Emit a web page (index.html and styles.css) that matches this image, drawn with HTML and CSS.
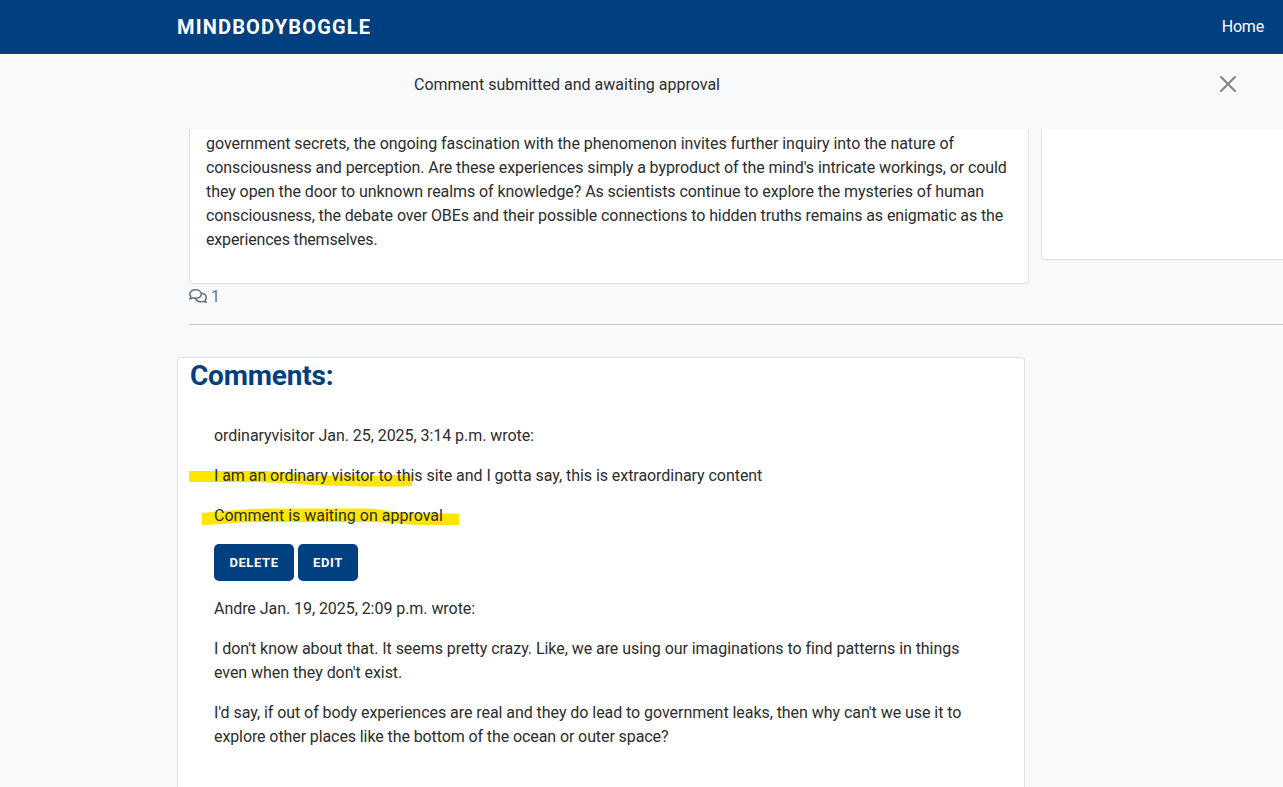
FILE: index.html
```
<!DOCTYPE html>
<html lang="en">
<head>
<meta charset="utf-8">
<title>MindBodyBoggle</title>
<link rel="stylesheet" href="styles.css">
</head>
<body>
<nav class="navbar">
  <a class="brand">MINDBODYBOGGLE</a>
  <a class="nav-link">Home</a>
</nav>
<div class="alert">
  <span class="alert-text">Comment submitted and awaiting approval</span>
  <svg class="close" viewBox="0 0 18 18"><path d="M2 2L16 16M16 2L2 16" fill="none" stroke="#808284" stroke-width="2" stroke-linecap="round"/></svg>
</div>
<main class="page">
  <section class="article-row">
    <article class="card article">
      <p><span class="snug">government secrets, the ongoing fascination with the phenomenon invites further inquiry into the nature of</span><br><span class="tighter">consciousness and perception. Are these experiences simply a byproduct of the mind's intricate workings, or could</span><br><span class="tight">they open the door to unknown realms of knowledge? As scientists continue to explore the mysteries of human</span><br><span class="tighter">consciousness, the debate over OBEs and their possible connections to hidden truths remains as enigmatic as the</span><br><span class="tightest">experiences themselves.</span></p>
    </article>
    <aside class="card side"></aside>
  </section>
  <div class="count">
    <svg class="count-icon" viewBox="0 0 18 14" fill="none" stroke="#6c757d" stroke-width="1.6" stroke-linejoin="round" stroke-linecap="round"><path d="M6.6.8C9.9.8 12.3 2.7 12.3 5.1S9.9 9.3 6.6 9.3C5.6 9.3 4.700 9.100 4 8.800C3.200 9.400 2.100 9.800.8 9.800C1.400 9.200 1.800 8.500 1.900 7.600C1.200 6.900.8 6 .8 5.100C.8 2.700 3.300.8 6.600.8Z"/><path d="M12.900 4.300C15.500 4.700 17.200 6.600 17.200 8.700C17.200 9.700 16.800 10.600 16.100 11.300C16.200 12.100 16.600 12.700 17.200 13.200C15.900 13.200 14.900 12.900 14 12.400C13.400 12.700 12.600 12.800 11.700 12.800C9.300 12.800 7.400 11.700 6.600 9.900"/></svg>
    <span>1</span>
  </div>
  <hr class="rule">
  <section class="card comments">
    <h3>Comments:</h3>
    <div class="comment-list">
      <p class="snug">ordinaryvisitor Jan. 25, 2025, 3:14 p.m. wrote:</p>
      <p class="snug">I am an ordinary visitor to this site and I gotta say, this is extraordinary content</p>
      <p>Comment is waiting on approval</p>
      <div class="actions"><button class="btn delete">DELETE</button><button class="btn edit">EDIT</button></div>
      <p class="snug">Andre Jan. 19, 2025, 2:09 p.m. wrote:</p>
      <p class="snug">I don't know about that. It seems pretty crazy. Like, we are using our imaginations to find patterns in things<br>even when they don't exist.</p>
      <p class="snug">I'd say, if out of body experiences are real and they do lead to government leaks, then why can't we use it to<br><span class="tighter">explore other places like the bottom of the ocean or outer space?</span></p>
    </div>
    <svg class="marker" viewBox="0 0 272 56"><path fill="#ffe600" d="M1 3H77C94 4 107 7 124 7.500H197L200 7H224V18L212 18.500H180C150 18 120 17 100 15.500C80 14 65 14 50 14H1Z"/><path fill="#ffe600" d="M14 45C40 43 58 41 78 40.500H180C195 41 207 45.500 224 45.500H271V57H235C214 57 205 54 184 54H65C47 54 31 57 14 57Z"/></svg>
  </section>
</main>
</body>
</html>
```
FILE: styles.css
```
* { box-sizing: border-box; }
body {
  margin: 0;
  height: 787px;
  overflow: hidden;
  background: #f8f9fb;
  color: #2b2d2f;
  font: 16px/24px Roboto, sans-serif;
}
.navbar {
  height: 54px;
  padding: 0 19px 0 177px;
  display: flex;
  align-items: center;
  justify-content: space-between;
  background: #004080;
  color: #fff;
}
.brand { font-size: 20px; font-weight: 700; letter-spacing: 1.17px; }
.nav-link { letter-spacing: -0.2px; }
.alert {
  height: 75px;
  padding: 19px 46px 0 414px;
  display: flex;
  justify-content: space-between;
}
.close { width: 18px; height: 18px; margin-top: 2px; }
.page { padding-left: 177px; }
.card { background: #fff; border: 1px solid #dee0e2; border-radius: 4px; }
.article-row { display: flex; gap: 12px; padding-left: 12px; align-items: flex-start; }
.article {
  flex: none;
  width: 840px;
  height: 155px;
  padding: 3px 16px 0;
  border-top: 0;
  border-radius: 0 0 4px 4px;
  white-space: nowrap;
}
.article p { margin: 0; }
.snug { letter-spacing: -0.052px; }
.tight { letter-spacing: -0.076px; }
.tighter { letter-spacing: -0.097px; }
.tightest { letter-spacing: -0.17px; }
.side { flex: 1; height: 131px; border-top: 0; border-right: 0; border-radius: 0 0 0 4px; }
.count { display: flex; gap: 4px; padding: 1px 0 0 12px; color: #6c757d; }
.count-icon { width: 18px; height: 14px; margin-top: 4px; }
.rule { margin: 15px 0 33px 12px; border: 0; height: 1px; background: #c5c7c9; }
.comments { position: relative; width: 848px; height: 460px; padding: 0 12px; margin-top: -1px; }
.comments h3 { margin: 0; padding-top: 1px; color: #004080; font-size: 28px; line-height: 34px; font-weight: 700; letter-spacing: -0.2px; }
.comment-list { padding: 31px 24px 0; white-space: nowrap; position: relative; z-index: 1; }
.comment-list p { margin: 0 0 16px; }
.actions { display: flex; gap: 4px; margin-bottom: 16px; }
.btn {
  height: 37px;
  padding: 0;
  border: 0;
  border-radius: 5px;
  background: #004080;
  color: #fff;
  font: 700 13px Roboto, sans-serif;
  letter-spacing: 0.6px;
}
.delete { width: 80px; }
.edit { width: 60px; }
.marker { position: absolute; left: 10px; top: 110px; width: 272px; height: 56px; overflow: visible; }
```
